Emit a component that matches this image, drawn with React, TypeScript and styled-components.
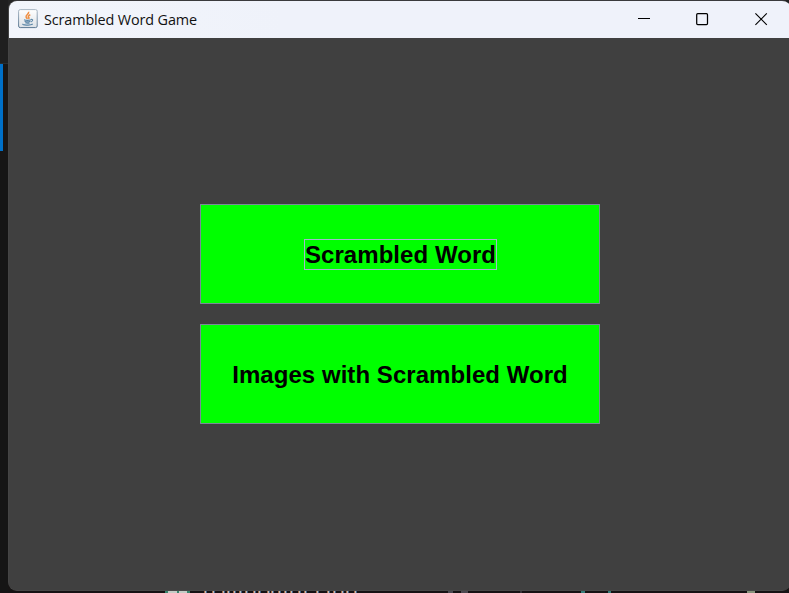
import React from "react";
import styled, { createGlobalStyle } from "styled-components";

const GlobalStyle = createGlobalStyle`
  * { box-sizing: border-box; }
  html, body { margin: 0; padding: 0; overflow: hidden; background: #161414; }
`;

const Desktop = styled.div`
  width: 789px;
  height: 593px;
  display: grid;
  grid-template-columns: 8px 783px;
  grid-template-rows: 591px 2px;
  background: #161414;
  overflow: hidden;
`;

const EditorEdge = styled.div`
  display: flex;
  flex-direction: column;
  background: linear-gradient(#1f1f1f 0 63px, #2c2c2c 63px 64px, #181615 64px 160px, #151515 160px);
`;

const ActiveMark = styled.div`
  width: 3px;
  height: 87px;
  margin-top: 64px;
  background: #0070c8;
`;

const Backdrop = styled.div`
  background: linear-gradient(#242424 0 20px, #161414 20px);
`;

const Window = styled.main`
  height: 591px;
  display: flex;
  flex-direction: column;
  border: 1px solid #484848;
  border-top-color: #3a3a3c;
  border-left-color: #444444;
  border-right: 0;
  border-radius: 9px;
  overflow: hidden;
  background: #404040;
`;

const TitleBar = styled.header`
  flex: 0 0 37px;
  display: flex;
  align-items: center;
  padding: 0 2px 0 9px;
  background: linear-gradient(90deg, #f2f5fb, #eff2fa 35%);
`;

const AppIcon = styled.svg`
  display: block;
  margin-bottom: 1px;
`;

const Title = styled.h1`
  flex: 1;
  margin: 0 0 0 6px;
  font: 400 14.4px/20px "Open Sans", "Noto Sans", sans-serif;
  letter-spacing: -0.12px;
  color: #111;
  white-space: nowrap;
`;

const WindowControls = styled.div`
  display: flex;
  height: 37px;
`;

const ControlButton = styled.button<{ $width: number; $shift: number }>`
  width: ${(p) => p.$width}px;
  padding: 0 0 1px ${(p) => p.$shift}px;
  border: 0;
  background: transparent;
  display: flex;
  align-items: center;
  justify-content: center;
  color: #000;
`;

const Content = styled.section`
  flex: 1;
  display: flex;
  flex-direction: column;
  gap: 20px;
  padding: 166px 0 0 191px;
`;

const GameButton = styled.button`
  width: 400px;
  height: 100px;
  padding: 0;
  display: flex;
  align-items: center;
  justify-content: center;
  border: 1px solid #7a8a99;
  border-radius: 0;
  background: #00ff00;
  color: #000;
  font: 700 24px/29px "Liberation Sans", Arial, sans-serif;
  white-space: nowrap;
  outline: none;
`;

const ButtonLabel = styled.span<{ $focused?: boolean }>`
  display: block;
  width: ${(p) => (p.$focused ? "193px" : "auto")};
  height: 31px;
  border: 1px solid ${(p) => (p.$focused ? "#a3b8cc" : "transparent")};
  letter-spacing: 0.05px;
  margin: 1px 0 0 ${(p) => (p.$focused ? "1px" : "0")};
`;

const Strip = styled.svg`
  display: block;
  grid-column: 1 / -1;
`;

const JavaIcon = () => (
  <AppIcon width="20" height="20" viewBox="0 0 20 20" fill="none">
    <defs>
      <linearGradient id="tile" x1="0" y1="0" x2="0" y2="1">
        <stop offset="0" stopColor="#ffffff" />
        <stop offset="1" stopColor="#dce1e6" />
      </linearGradient>
      <linearGradient id="rim" x1="0" y1="0" x2="0" y2="1">
        <stop offset="0" stopColor="#a9b7c4" />
        <stop offset="1" stopColor="#5b7893" />
      </linearGradient>
    </defs>
    <rect x="0.6" y="0.6" width="18.6" height="18" rx="1.6" fill="url(#tile)" stroke="url(#rim)" />
    <path d="M10.6 2.8C11.4 5 7.4 6 8.1 8c.2.8 1 1.2 1.3 1.8M12.3 5.7c-2 .8-2.5 1.8-1.6 2.7.6.6.2 1.2-.3 1.6" stroke="#ef8f43" strokeWidth="1.5" />
    <path d="M6 10.7c1.5.6 5.3.6 7 0M6.6 12.2c1.4.7 4 .7 5.7.1M7.3 13.8c1.3.5 3 .5 4.3.1M13 10.5c2-.5 2.5 1.3-.3 2.5M4.8 15c-1.2.7 7 2.1 10 .1" stroke="#5d87a8" strokeWidth="1.15" />
  </AppIcon>
);

const MinimizeIcon = () => (
  <svg width="13" height="13" viewBox="0 0 13 13">
    <path d="M0 5.5h12" stroke="currentColor" />
  </svg>
);

const MaximizeIcon = () => (
  <svg width="13" height="13" viewBox="0 0 13 13" fill="none">
    <rect x="0.7" y="0.7" width="10.8" height="10.8" rx="1" stroke="currentColor" strokeWidth="1.25" />
  </svg>
);

const CloseIcon = () => (
  <svg width="13" height="13" viewBox="0 0 13 13">
    <path d="m.4.4 11.4 11.4M11.8.4.4 11.8" stroke="currentColor" strokeWidth="1.15" />
  </svg>
);

const marks: [number, number, string][] = [
  [165, 25, "#38846c"], [168, 9, "#c4ccc6"], [179, 8, "#c4ccc6"],
  [448, 5, "#494750"], [461, 7, "#4d4a52"], [520, 2, "#343238"],
  [581, 4, "#367d7a"], [608, 3, "#367d7a"], [747, 8, "#87937c"],
];

// Left edges of the letter stems, each with warm and cool subpixel fringes.
const stems = [
  204, 212, 222, 227, 233, 239, 245, 253, 258, 267, 271, 278, 284, 290,
  298, 304, 316, 327, 333, 341, 346, 354,
];

const TaskStrip = () => (
  <Strip width="789" height="2" viewBox="0 0 789 2" shapeRendering="crispEdges">
    <rect width="789" height="2" fill="#161214" />
    {marks.map(([x, w, fill]) => (
      <rect key={x} x={x} width={w} height="2" fill={fill} />
    ))}
    {stems.map((x) => (
      <g key={x}>
        <rect x={x} width="1" height="2" fill="#a56d48" />
        <rect x={x + 1} width="1" height="2" fill="#b9bdbe" />
        <rect x={x + 2} width="1" height="2" fill="#405f86" />
      </g>
    ))}
  </Strip>
);

export default function App() {
  return (
    <>
      <GlobalStyle />
      <Desktop>
        <EditorEdge>
          <ActiveMark />
        </EditorEdge>
        <Backdrop>
          <Window>
            <TitleBar>
              <JavaIcon />
              <Title>Scrambled Word Game</Title>
              <WindowControls>
                <ControlButton $width={58} $shift={1} aria-label="Minimize">
                  <MinimizeIcon />
                </ControlButton>
                <ControlButton $width={58} $shift={1} aria-label="Maximize">
                  <MaximizeIcon />
                </ControlButton>
                <ControlButton $width={58} $shift={3} aria-label="Close">
                  <CloseIcon />
                </ControlButton>
              </WindowControls>
            </TitleBar>
            <Content>
              <GameButton>
                <ButtonLabel $focused>Scrambled Word</ButtonLabel>
              </GameButton>
              <GameButton>
                <ButtonLabel>Images with Scrambled Word</ButtonLabel>
              </GameButton>
            </Content>
          </Window>
        </Backdrop>
        <TaskStrip />
      </Desktop>
    </>
  );
}
